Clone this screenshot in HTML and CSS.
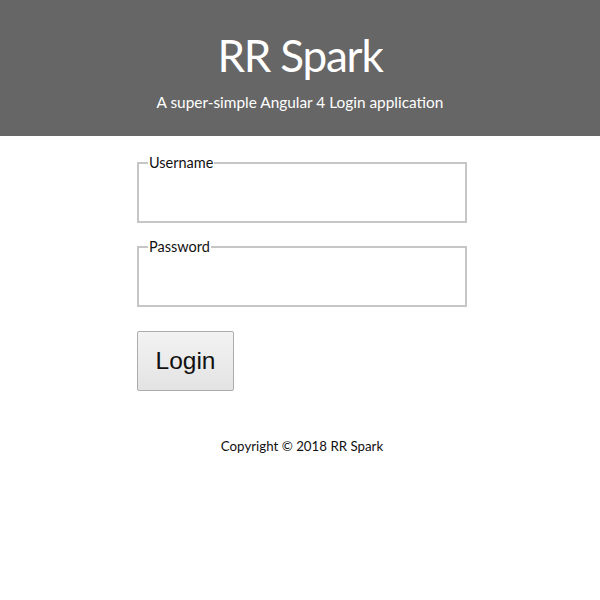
FILE: index.html
```html
<!DOCTYPE html>
<html>
<head>
<meta charset="utf-8">
<link rel="stylesheet" href="styles.css">
</head>
<body>
<header class="hero">
  <h1 class="title">RR Spark</h1>
  <p class="subtitle">A super-simple Angular 4 Login application</p>
</header>
<main class="content">
  <form class="login">
    <fieldset class="field">
      <legend class="legend">Username</legend>
      <input class="input" type="text">
    </fieldset>
    <fieldset class="field">
      <legend class="legend">Password</legend>
      <input class="input" type="password">
    </fieldset>
    <button class="btn" type="button">Login</button>
  </form>
  <footer class="copy">Copyright © 2018 RR Spark</footer>
</main>
</body>
</html>
```
FILE: styles.css
```css
html, body { margin: 0; padding: 0; background: #fff; }
body { font-family: Lato, "Open Sans", sans-serif; color: #111; }
.hero {
  background: #666666;
  height: 136px;
  color: #fff;
  text-align: center;
  display: flex;
  flex-direction: column;
  align-items: center;
  padding-top: 28px;
  box-sizing: border-box;
}
.title { margin: 0; font-size: 44px; font-weight: 400; line-height: 54px; letter-spacing: -1.2px; }
.subtitle { margin: 10px 0 0; font-size: 15.4px; line-height: 20px; }
.content { display: flex; flex-direction: column; align-items: center; }
.login { width: 330px; display: flex; flex-direction: column; margin-top: 19px; margin-left: 4px; }
.field {
  margin: 0 0 16px;
  padding: 0 9px 2px;
  border: 2px solid #c6c6c6;
  min-width: 0;
}
.field:last-of-type { margin-bottom: 24px; }
.legend { padding: 0 1px; font-size: 14.5px; line-height: 16px; color: #111; }
.input { display: block; border: none; outline: none; width: 100%; height: 48px; margin: 0; padding: 0; }
.btn {
  width: 97px; height: 60px;
  font-family: "Liberation Sans", Arial, sans-serif;
  font-size: 24.5px;
  color: #111;
  background: linear-gradient(#f3f3f3, #e3e3e3);
  border: 1px solid #acacac;
  border-radius: 2px;
  padding: 0;
}
.copy { margin-top: 47px; font-size: 13.3px; line-height: 17px; color: #111; margin-left: 4px; }
```
